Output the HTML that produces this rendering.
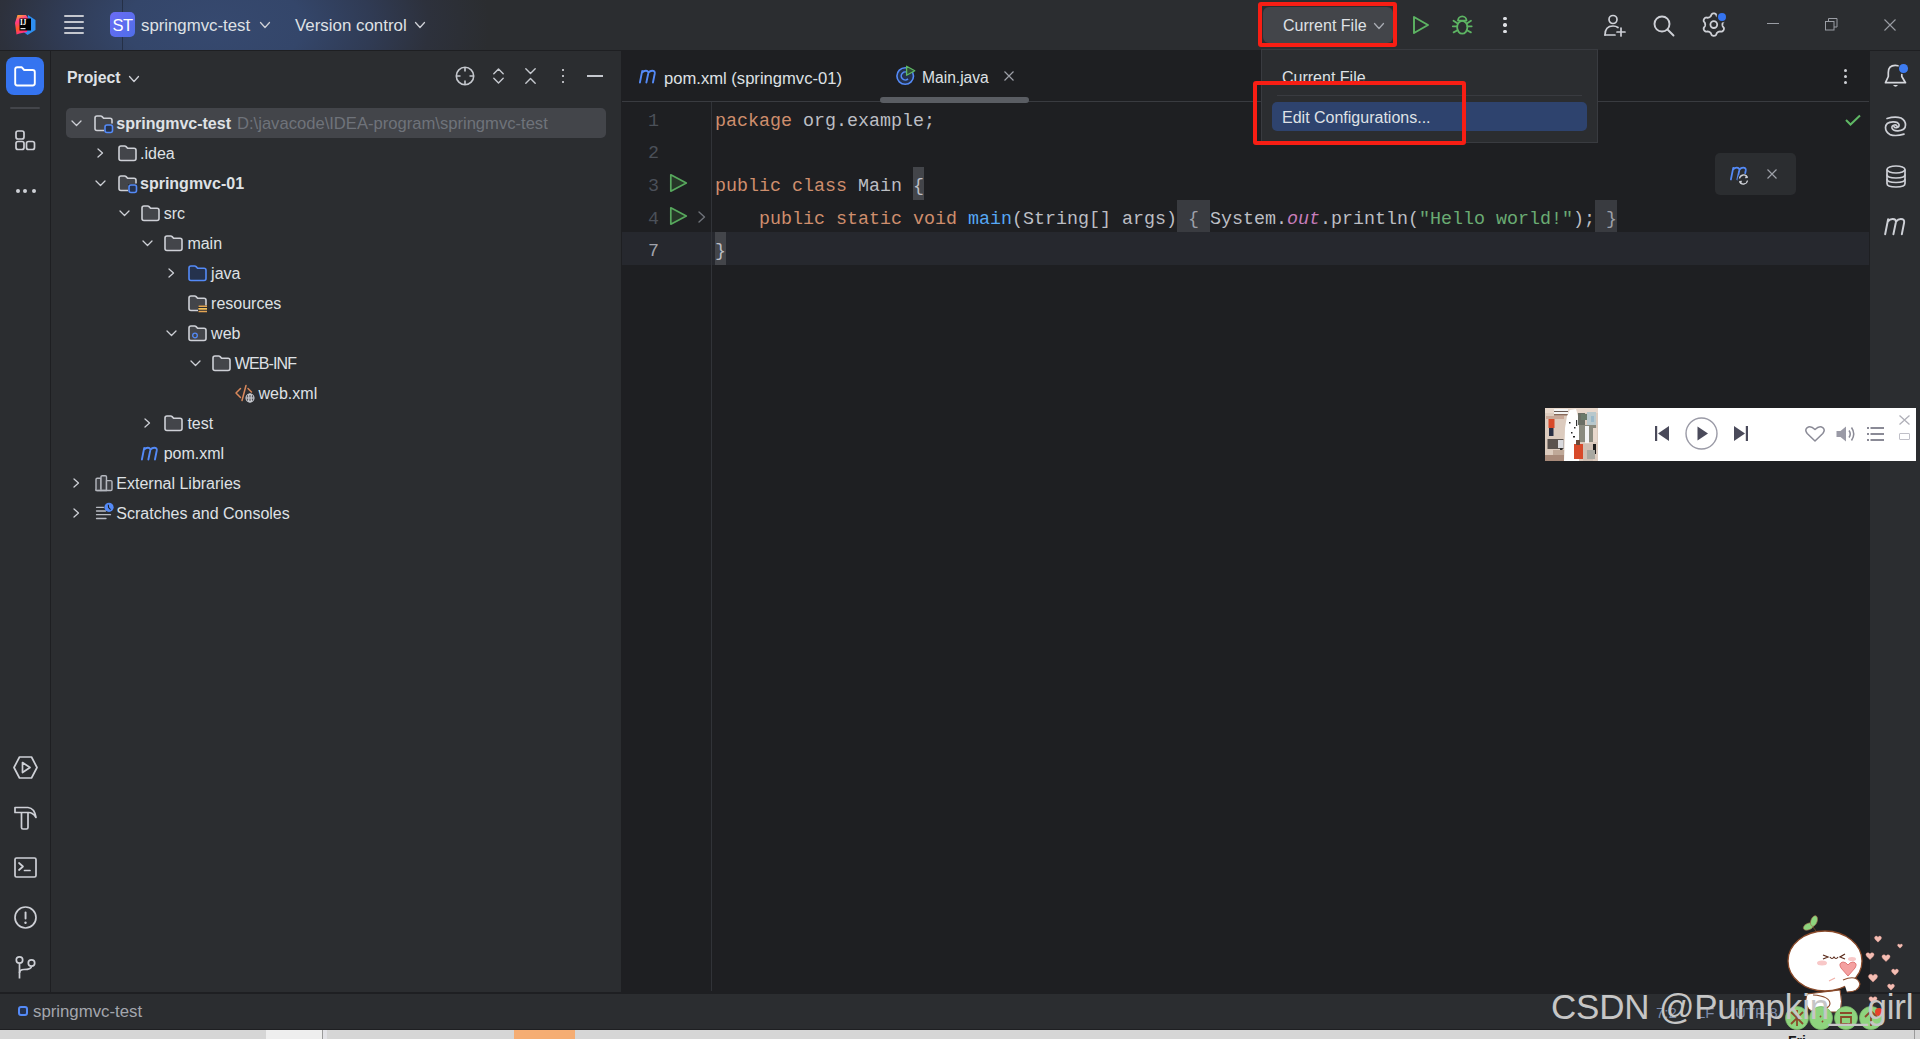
<!DOCTYPE html>
<html><head><meta charset="utf-8">
<style>
*{margin:0;padding:0;box-sizing:border-box}
html,body{width:1920px;height:1039px;overflow:hidden;background:#2B2D30;font-family:"Liberation Sans",sans-serif;color:#DFE1E5}
.a{position:absolute}
.tx{white-space:pre;line-height:1}
svg{position:absolute;overflow:visible}
</style></head>
<body>

<div class="a" style="left:0px;top:0px;width:1920px;height:50px;background:#2B2D30;"></div>
<div class="a" style="left:0px;top:0px;width:700px;height:50px;background:radial-gradient(ellipse 275px 150px at 215px 25px,#36496F 0%,#34466A 32%,#303B54 57%,#2D313C 78%,#2B2D30 100%);"></div>
<div class="a" style="left:122px;top:0px;width:1px;height:50px;background:rgba(20,24,34,0.45);"></div>
<div class="a" style="left:0px;top:50px;width:1920px;height:1px;background:#1E1F22;"></div>
<div class="a" style="left:0px;top:51px;width:50px;height:941px;background:#2B2D30;"></div>
<div class="a" style="left:50px;top:51px;width:1px;height:941px;background:#1E1F22;"></div>
<div class="a" style="left:51px;top:51px;width:570px;height:941px;background:#2B2D30;"></div>
<div class="a" style="left:621px;top:51px;width:1px;height:941px;background:#1E1F22;"></div>
<div class="a" style="left:622px;top:51px;width:1247px;height:941px;background:#1E1F22;"></div>
<div class="a" style="left:1869px;top:51px;width:1px;height:941px;background:#1E1F22;"></div>
<div class="a" style="left:1870px;top:51px;width:50px;height:941px;background:#2B2D30;"></div>
<div class="a" style="left:0px;top:992px;width:1920px;height:2px;background:#1E1F22;"></div>
<div class="a" style="left:0px;top:994px;width:1920px;height:35px;background:#2B2D30;"></div>
<div class="a" style="left:0px;top:1029px;width:1920px;height:1px;background:#1E1F22;"></div>
<div class="a" style="left:0px;top:1030px;width:1920px;height:9px;background:#D6D6D6;"></div>
<svg style="left:15px;top:14px;" width="21" height="21" viewBox="0 0 21 21"><defs><linearGradient id="ijg" x1="0" y1="0" x2="0.3" y2="1"><stop offset="0" stop-color="#FFC21A"/><stop offset="0.35" stop-color="#FF3A8C"/><stop offset="0.7" stop-color="#FF5A1E"/><stop offset="1" stop-color="#FF2D8A"/></linearGradient></defs>
<path d="M13 1 L20.5 6 L20.5 16 L12.5 21 L8 17.5 L12 9 Z" fill="#2E8EF0"/>
<path d="M2.5 1 L11 1 L13.5 5 L12 18 L4.5 19.5 L1.5 20.5 L0 9 Z" fill="url(#ijg)"/>
<rect x="4.5" y="4.5" width="11.5" height="12" fill="#000"/>
<text x="5" y="10.8" font-size="7.2" font-weight="bold" fill="#fff" font-family="Liberation Serif">IJ</text>
<rect x="5.5" y="14" width="5" height="1.2" fill="#E0E0E0"/></svg>
<div class="a" style="left:64px;top:15px;width:20px;height:2px;background:#C4C7CE;border-radius:1px"></div>
<div class="a" style="left:64px;top:21px;width:20px;height:2px;background:#C4C7CE;border-radius:1px"></div>
<div class="a" style="left:64px;top:27px;width:20px;height:2px;background:#C4C7CE;border-radius:1px"></div>
<div class="a" style="left:64px;top:32px;width:20px;height:2px;background:#C4C7CE;border-radius:1px"></div>
<div class="a" style="left:110px;top:12px;width:25px;height:25px;background:linear-gradient(135deg,#6B6CF5,#4F6EE8);border-radius:5px"></div>
<div class="a tx " style="left:112.5px;top:17px;font-size:16.5px;color:#FFFFFF;font-family:'Liberation Sans',sans-serif;letter-spacing:-0.6px;">ST</div>
<div class="a tx " style="left:141px;top:18px;font-size:16.8px;color:#DFE1E5;font-family:'Liberation Sans',sans-serif;">springmvc-test</div>
<svg style="left:260px;top:22px;" width="10" height="6" viewBox="0 0 10 6"><path d="M0.5 0.5 L5.0 5.5 L9.5 0.5" fill="none" stroke="#CED0D6" stroke-width="1.3" stroke-linecap="round" stroke-linejoin="round"/></svg>
<div class="a tx " style="left:295px;top:18px;font-size:16.9px;color:#DFE1E5;font-family:'Liberation Sans',sans-serif;">Version control</div>
<svg style="left:415px;top:22px;" width="10" height="6" viewBox="0 0 10 6"><path d="M0.5 0.5 L5.0 5.5 L9.5 0.5" fill="none" stroke="#CED0D6" stroke-width="1.3" stroke-linecap="round" stroke-linejoin="round"/></svg>
<div class="a" style="left:1263px;top:7px;width:130px;height:36px;background:#43454A;border-radius:6px"></div>
<div class="a tx " style="left:1283px;top:18px;font-size:16px;color:#DFE1E5;font-family:'Liberation Sans',sans-serif;">Current File</div>
<svg style="left:1374px;top:23px;" width="10" height="6" viewBox="0 0 10 6"><path d="M0.5 0.5 L5.0 5.5 L9.5 0.5" fill="none" stroke="#A8ABB2" stroke-width="1.3" stroke-linecap="round" stroke-linejoin="round"/></svg>
<svg style="left:1412px;top:15px;" width="18" height="20" viewBox="0 0 18 20"><path d="M2 2 L16 10 L2 18 Z" fill="none" stroke="#5DB463" stroke-width="1.9" stroke-linejoin="round"/></svg>
<svg style="left:1452px;top:15px;" width="21" height="20" viewBox="0 0 21 20"><g fill="none" stroke="#5DB463" stroke-width="1.8" stroke-linecap="round" stroke-linejoin="round">
<path d="M6 5.6 A4.25 4.25 0 0 1 14.5 5.6 Z"/><ellipse cx="10.25" cy="12.3" rx="5.1" ry="6.4"/>
<path d="M5.3 8.3 L1.5 5.8 M5 11.3 L0.8 11.3 M5.6 15.3 L1.6 17.4 M15.2 8.3 L19 5.8 M15.5 11.3 L19.7 11.3 M14.9 15.3 L18.9 17.4"/></g></svg>
<div class="a" style="left:1503.2px;top:16.7px;width:3.4px;height:3.4px;background:#DFE1E5;border-radius:50%"></div>
<div class="a" style="left:1503.2px;top:23.3px;width:3.4px;height:3.4px;background:#DFE1E5;border-radius:50%"></div>
<div class="a" style="left:1503.2px;top:29.900000000000002px;width:3.4px;height:3.4px;background:#DFE1E5;border-radius:50%"></div>
<svg style="left:1604px;top:14px;" width="23" height="23" viewBox="0 0 23 23"><g fill="none" stroke="#CED0D6" stroke-width="1.7" stroke-linecap="round">
<circle cx="9" cy="5.5" r="4"/><path d="M1 21 Q1 12 9 12 Q12 12 14 13.5"/><path d="M1 21 L11 21"/><path d="M17 14 L17 22 M13 18 L21 18"/></g></svg>
<svg style="left:1653px;top:15px;" width="22" height="22" viewBox="0 0 22 22"><g fill="none" stroke="#CED0D6" stroke-width="1.9" stroke-linecap="round"><circle cx="9" cy="9" r="7.5"/><path d="M14.5 14.5 L20.5 20.5"/></g></svg>
<svg style="left:1703px;top:13px;" width="22" height="24" viewBox="0 0 22 24"><g fill="none" stroke="#CED0D6" stroke-width="1.8" stroke-linejoin="round"><path d="M19.40 11.60 L19.42 12.05 L19.50 12.51 L19.62 13.00 L19.82 13.52 L20.36 14.16 L20.86 14.87 L20.95 15.50 L20.90 16.10 L20.75 16.67 L20.50 17.20 L20.16 17.68 L19.75 18.10 L19.25 18.44 L18.66 18.68 L17.80 18.60 L16.97 18.45 L16.42 18.54 L15.94 18.67 L15.50 18.84 L15.10 19.05 L14.72 19.29 L14.36 19.59 L14.00 19.94 L13.65 20.37 L13.36 21.16 L13.00 21.95 L12.50 22.34 L11.96 22.60 L11.38 22.75 L10.80 22.80 L10.22 22.75 L9.64 22.60 L9.10 22.34 L8.60 21.95 L8.24 21.16 L7.95 20.37 L7.60 19.94 L7.24 19.59 L6.88 19.29 L6.50 19.05 L6.10 18.84 L5.66 18.67 L5.18 18.54 L4.63 18.45 L3.80 18.60 L2.94 18.68 L2.35 18.44 L1.85 18.10 L1.44 17.68 L1.10 17.20 L0.85 16.67 L0.70 16.10 L0.65 15.50 L0.74 14.87 L1.24 14.16 L1.78 13.52 L1.98 13.00 L2.10 12.51 L2.18 12.05 L2.20 11.60 L2.18 11.15 L2.10 10.69 L1.98 10.20 L1.78 9.68 L1.24 9.04 L0.74 8.33 L0.65 7.70 L0.70 7.10 L0.85 6.53 L1.10 6.00 L1.44 5.52 L1.85 5.10 L2.35 4.76 L2.94 4.52 L3.80 4.60 L4.63 4.75 L5.18 4.66 L5.66 4.53 L6.10 4.36 L6.50 4.15 L6.88 3.91 L7.24 3.61 L7.60 3.26 L7.95 2.83 L8.24 2.04 L8.60 1.25 L9.10 0.86 L9.64 0.60 L10.22 0.45 L10.80 0.40 L11.38 0.45 L11.96 0.60 L12.50 0.86 L13.00 1.25 L13.36 2.04 L13.65 2.83 L14.00 3.26 L14.36 3.61 L14.72 3.91 L15.10 4.15 L15.50 4.36 L15.94 4.53 L16.42 4.66 L16.97 4.75 L17.80 4.60 L18.66 4.52 L19.25 4.76 L19.75 5.10 L20.16 5.52 L20.50 6.00 L20.75 6.53 L20.90 7.10 L20.95 7.70 L20.86 8.33 L20.36 9.04 L19.82 9.68 L19.62 10.20 L19.50 10.69 L19.42 11.15 Z"/><circle cx="10.8" cy="11.6" r="3.4"/></g></svg>
<div class="a" style="left:1718px;top:13px;width:8px;height:8px;background:#3574F0;border-radius:50%;box-shadow:0 0 0 1.5px #2B2D30"></div>
<div class="a" style="left:1767px;top:23px;width:12px;height:1px;background:#9A9DA4;"></div>
<svg style="left:1825px;top:18px;" width="13" height="13" viewBox="0 0 13 13"><g fill="none" stroke="#9A9DA4" stroke-width="1"><rect x="0.5" y="3.5" width="8.5" height="8.5"/><path d="M3.5 3.5 L3.5 0.5 L12 0.5 L12 9 L9 9"/></g></svg>
<svg style="left:1884px;top:19px;" width="12" height="12" viewBox="0 0 12 12"><path d="M0.5 0.5 L11.5 11.5 M11.5 0.5 L0.5 11.5" stroke="#9A9DA4" stroke-width="1.1"/></svg>
<div class="a" style="left:6px;top:57px;width:38px;height:38px;background:#3574F0;border-radius:8px"></div>
<svg style="left:13px;top:66px;" width="24" height="21" viewBox="0 0 24 21"><path d="M2.2 3.3 Q2.2 1.2 4.3 1.2 L8.6 1.2 L11.2 4 L19.6 4 Q21.8 4 21.8 6.2 L21.8 17.3 Q21.8 19.5 19.6 19.5 L4.3 19.5 Q2.2 19.5 2.2 17.3 Z" fill="none" stroke="#FFFFFF" stroke-width="1.9" stroke-linejoin="round"/></svg>
<div class="a" style="left:10px;top:107px;width:30px;height:2px;background:#43454A;border-radius:1px"></div>
<svg style="left:15px;top:130px;" width="21" height="21" viewBox="0 0 21 21"><g fill="none" stroke="#CED0D6" stroke-width="1.7"><rect x="1" y="1" width="8" height="8" rx="2"/><rect x="1" y="11.5" width="8" height="8" rx="2"/><rect x="11.5" y="11.5" width="8" height="8" rx="2"/></g></svg>
<div class="a" style="left:15.5px;top:188.5px;width:4px;height:4px;background:#CED0D6;border-radius:50%"></div>
<div class="a" style="left:23.4px;top:188.5px;width:4px;height:4px;background:#CED0D6;border-radius:50%"></div>
<div class="a" style="left:31.6px;top:188.5px;width:4px;height:4px;background:#CED0D6;border-radius:50%"></div>
<svg style="left:13px;top:756px;" width="25" height="23" viewBox="0 0 25 23"><g fill="none" stroke="#CED0D6" stroke-width="1.7" stroke-linejoin="round"><path d="M6.5 1 L18.5 1 L24 11.5 L18.5 22 L6.5 22 L1 11.5 Z"/><path d="M9.5 6.5 L17 11.5 L9.5 16.5 Z"/></g></svg>
<svg style="left:14px;top:806px;" width="24" height="24" viewBox="0 0 24 24"><g fill="none" stroke="#CED0D6" stroke-width="1.7" stroke-linejoin="round"><path d="M1 1.5 L14 1.5 Q20.5 2 22 11.5 Q19 6.5 14.5 6.5 L1 6.5 Z"/><path d="M7.5 6.5 L7.5 21.5 Q7.5 23 9 23 L12.5 23 Q14 23 14 21.5 L14 6.5"/></g></svg>
<svg style="left:14px;top:857px;" width="23" height="21" viewBox="0 0 23 21"><g fill="none" stroke="#CED0D6" stroke-width="1.7" stroke-linejoin="round" stroke-linecap="round"><rect x="1" y="1" width="21" height="19" rx="1.5"/><path d="M5 6 L9 9.5 L5 13"/><path d="M10.5 13.5 L16 13.5"/></g></svg>
<svg style="left:14px;top:906px;" width="23" height="23" viewBox="0 0 23 23"><g fill="none" stroke="#CED0D6" stroke-width="1.7"><circle cx="11.5" cy="11.5" r="10.5"/></g><rect x="10.6" y="5.5" width="1.9" height="8" rx="0.9" fill="#CED0D6"/><circle cx="11.5" cy="16.8" r="1.2" fill="#CED0D6"/></svg>
<svg style="left:15px;top:956px;" width="21" height="23" viewBox="0 0 21 23"><g fill="none" stroke="#CED0D6" stroke-width="1.7"><circle cx="4.5" cy="4" r="3.2"/><circle cx="16.5" cy="7" r="3.2"/><path d="M4.5 7.2 L4.5 22.5"/><path d="M4.5 17 Q4.5 13.5 9 13.5 Q16.5 13.5 16.5 10.2"/></g></svg>
<div class="a tx " style="left:67px;top:70px;font-size:15.8px;color:#DFE1E5;font-family:'Liberation Sans',sans-serif;font-weight:bold;">Project</div>
<svg style="left:128.5px;top:75.5px;" width="10" height="6" viewBox="0 0 10 6"><path d="M0.5 0.5 L5.0 5.5 L9.5 0.5" fill="none" stroke="#CED0D6" stroke-width="1.3" stroke-linecap="round" stroke-linejoin="round"/></svg>
<svg style="left:455px;top:66px;" width="20" height="20" viewBox="0 0 20 20"><g fill="none" stroke="#C5C8CE" stroke-width="1.6"><circle cx="10" cy="10" r="8.7"/><path d="M10 1.3 L10 5.5 M10 14.5 L10 18.7 M1.3 10 L5.5 10 M14.5 10 L18.7 10"/></g></svg>
<svg style="left:493px;top:68px;" width="11" height="16" viewBox="0 0 11 16"><g fill="none" stroke="#C5C8CE" stroke-width="1.4" stroke-linecap="round" stroke-linejoin="round"><path d="M0.8 5.8 L5.5 1 L10.2 5.8"/><path d="M0.8 10.2 L5.5 15 L10.2 10.2"/></g></svg>
<svg style="left:525px;top:68px;" width="11" height="16" viewBox="0 0 11 16"><g fill="none" stroke="#C5C8CE" stroke-width="1.4" stroke-linecap="round" stroke-linejoin="round"><path d="M0.8 0.8 L5.5 5.5 L10.2 0.8"/><path d="M0.8 15.2 L5.5 10.5 L10.2 15.2"/></g></svg>
<div class="a" style="left:561.7px;top:68.5px;width:2.6px;height:2.6px;background:#D0D2D7;border-radius:0.8px"></div>
<div class="a" style="left:561.7px;top:74.60000000000001px;width:2.6px;height:2.6px;background:#D0D2D7;border-radius:0.8px"></div>
<div class="a" style="left:561.7px;top:80.9px;width:2.6px;height:2.6px;background:#D0D2D7;border-radius:0.8px"></div>
<div class="a" style="left:587px;top:75px;width:16px;height:1.8px;background:#C5C8CE;"></div>
<div class="a" style="left:66px;top:108px;width:540px;height:30px;background:#43454A;border-radius:5px"></div>
<svg style="left:71.0px;top:120px;" width="11" height="7" viewBox="0 0 11 7"><path d="M1 1 L5.5 5.5 L10 1" fill="none" stroke="#CED0D6" stroke-width="1.3" stroke-linecap="round" stroke-linejoin="round"/></svg>
<svg style="left:94px;top:115px;" width="20" height="18" viewBox="0 0 20 18"><path d="M1 3 Q1 1 3 1 L6.6 1 Q7.5 1 8.1 1.6 L9.6 3.3 L16 3.3 Q18 3.3 18 5.3 L18 9 L10 9 L10 15.5 L3 15.5 Q1 15.5 1 13.5 Z" fill="#43454A" stroke="none"/><path d="M10 15.5 L3 15.5 Q1 15.5 1 13.5 L1 3 Q1 1 3 1 L6.6 1 Q7.5 1 8.1 1.6 L9.6 3.3 L16 3.3 Q18 3.3 18 5.3 L18 8.5" fill="none" stroke="#CED0D6" stroke-width="1.6" stroke-linejoin="round"/><rect x="11" y="10" width="7.5" height="7.5" rx="2" fill="#25324D" stroke="#548AF7" stroke-width="1.6"/></svg>
<div class="a tx " style="left:116.3px;top:116px;font-size:16px;color:#DFE1E5;font-family:'Liberation Sans',sans-serif;font-weight:bold;">springmvc-test</div>
<div class="a tx " style="left:237px;top:116px;font-size:16.6px;color:#6F737A;font-family:'Liberation Sans',sans-serif;">D:\javacode\IDEA-program\springmvc-test</div>
<svg style="left:96.8px;top:148px;" width="7" height="10" viewBox="0 0 7 10"><path d="M1 1 L5.5 5 L1 9" fill="none" stroke="#CED0D6" stroke-width="1.3" stroke-linecap="round" stroke-linejoin="round"/></svg>
<svg style="left:118px;top:145px;" width="20" height="18" viewBox="0 0 20 18"><path d="M1 3 Q1 1 3 1 L6.6 1 Q7.5 1 8.1 1.6 L9.6 3.3 L16 3.3 Q18 3.3 18 5.3 L18 13.5 Q18 15.5 16 15.5 L3 15.5 Q1 15.5 1 13.5 Z" fill="#43454A" stroke="#CED0D6" stroke-width="1.6" stroke-linejoin="round"/></svg>
<div class="a tx " style="left:140.0px;top:146px;font-size:16px;color:#DFE1E5;font-family:'Liberation Sans',sans-serif;">.idea</div>
<svg style="left:94.8px;top:180px;" width="11" height="7" viewBox="0 0 11 7"><path d="M1 1 L5.5 5.5 L10 1" fill="none" stroke="#CED0D6" stroke-width="1.3" stroke-linecap="round" stroke-linejoin="round"/></svg>
<svg style="left:118px;top:175px;" width="20" height="18" viewBox="0 0 20 18"><path d="M1 3 Q1 1 3 1 L6.6 1 Q7.5 1 8.1 1.6 L9.6 3.3 L16 3.3 Q18 3.3 18 5.3 L18 9 L10 9 L10 15.5 L3 15.5 Q1 15.5 1 13.5 Z" fill="#43454A" stroke="none"/><path d="M10 15.5 L3 15.5 Q1 15.5 1 13.5 L1 3 Q1 1 3 1 L6.6 1 Q7.5 1 8.1 1.6 L9.6 3.3 L16 3.3 Q18 3.3 18 5.3 L18 8.5" fill="none" stroke="#CED0D6" stroke-width="1.6" stroke-linejoin="round"/><rect x="11" y="10" width="7.5" height="7.5" rx="2" fill="#25324D" stroke="#548AF7" stroke-width="1.6"/></svg>
<div class="a tx " style="left:140.0px;top:176px;font-size:16px;color:#DFE1E5;font-family:'Liberation Sans',sans-serif;font-weight:bold;">springmvc-01</div>
<svg style="left:118.6px;top:210px;" width="11" height="7" viewBox="0 0 11 7"><path d="M1 1 L5.5 5.5 L10 1" fill="none" stroke="#CED0D6" stroke-width="1.3" stroke-linecap="round" stroke-linejoin="round"/></svg>
<svg style="left:141px;top:205px;" width="20" height="18" viewBox="0 0 20 18"><path d="M1 3 Q1 1 3 1 L6.6 1 Q7.5 1 8.1 1.6 L9.6 3.3 L16 3.3 Q18 3.3 18 5.3 L18 13.5 Q18 15.5 16 15.5 L3 15.5 Q1 15.5 1 13.5 Z" fill="#43454A" stroke="#CED0D6" stroke-width="1.6" stroke-linejoin="round"/></svg>
<div class="a tx " style="left:163.7px;top:206px;font-size:16px;color:#DFE1E5;font-family:'Liberation Sans',sans-serif;">src</div>
<svg style="left:142.4px;top:240px;" width="11" height="7" viewBox="0 0 11 7"><path d="M1 1 L5.5 5.5 L10 1" fill="none" stroke="#CED0D6" stroke-width="1.3" stroke-linecap="round" stroke-linejoin="round"/></svg>
<svg style="left:164px;top:235px;" width="20" height="18" viewBox="0 0 20 18"><path d="M1 3 Q1 1 3 1 L6.6 1 Q7.5 1 8.1 1.6 L9.6 3.3 L16 3.3 Q18 3.3 18 5.3 L18 13.5 Q18 15.5 16 15.5 L3 15.5 Q1 15.5 1 13.5 Z" fill="#43454A" stroke="#CED0D6" stroke-width="1.6" stroke-linejoin="round"/></svg>
<div class="a tx " style="left:187.4px;top:236px;font-size:16px;color:#DFE1E5;font-family:'Liberation Sans',sans-serif;">main</div>
<svg style="left:167.9px;top:268px;" width="7" height="10" viewBox="0 0 7 10"><path d="M1 1 L5.5 5 L1 9" fill="none" stroke="#CED0D6" stroke-width="1.3" stroke-linecap="round" stroke-linejoin="round"/></svg>
<svg style="left:188px;top:265px;" width="20" height="18" viewBox="0 0 20 18"><path d="M1 3 Q1 1 3 1 L6.6 1 Q7.5 1 8.1 1.6 L9.6 3.3 L16 3.3 Q18 3.3 18 5.3 L18 13.5 Q18 15.5 16 15.5 L3 15.5 Q1 15.5 1 13.5 Z" fill="#25324D" stroke="#548AF7" stroke-width="1.6" stroke-linejoin="round"/></svg>
<div class="a tx " style="left:211.1px;top:266px;font-size:16px;color:#DFE1E5;font-family:'Liberation Sans',sans-serif;">java</div>
<svg style="left:188px;top:295px;" width="20" height="18" viewBox="0 0 20 18"><path d="M1 3 Q1 1 3 1 L6.6 1 Q7.5 1 8.1 1.6 L9.6 3.3 L16 3.3 Q18 3.3 18 5.3 L18 13.5 Q18 15.5 16 15.5 L3 15.5 Q1 15.5 1 13.5 Z" fill="#43454A" stroke="#CED0D6" stroke-width="1.6" stroke-linejoin="round"/><rect x="10" y="10.5" width="10" height="6.5" fill="#2B2D30"/><path d="M10.5 11.2 L19 11.2 M10.5 13.8 L19 13.8 M10.5 16.5 L19 16.5" stroke="#E3A554" stroke-width="1.4"/><path d="M10.5 13.8 L19 13.8" stroke="#F2C55C" stroke-width="1.4"/></svg>
<div class="a tx " style="left:211.1px;top:296px;font-size:16px;color:#DFE1E5;font-family:'Liberation Sans',sans-serif;">resources</div>
<svg style="left:166.2px;top:330px;" width="11" height="7" viewBox="0 0 11 7"><path d="M1 1 L5.5 5.5 L10 1" fill="none" stroke="#CED0D6" stroke-width="1.3" stroke-linecap="round" stroke-linejoin="round"/></svg>
<svg style="left:188px;top:325px;" width="20" height="18" viewBox="0 0 20 18"><path d="M1 3 Q1 1 3 1 L6.6 1 Q7.5 1 8.1 1.6 L9.6 3.3 L16 3.3 Q18 3.3 18 5.3 L18 13.5 Q18 15.5 16 15.5 L3 15.5 Q1 15.5 1 13.5 Z" fill="#43454A" stroke="#CED0D6" stroke-width="1.6" stroke-linejoin="round"/><circle cx="7" cy="10.5" r="2.3" fill="none" stroke="#548AF7" stroke-width="1.3"/></svg>
<div class="a tx " style="left:211.1px;top:326px;font-size:16px;color:#DFE1E5;font-family:'Liberation Sans',sans-serif;">web</div>
<svg style="left:190.0px;top:360px;" width="11" height="7" viewBox="0 0 11 7"><path d="M1 1 L5.5 5.5 L10 1" fill="none" stroke="#CED0D6" stroke-width="1.3" stroke-linecap="round" stroke-linejoin="round"/></svg>
<svg style="left:212px;top:355px;" width="20" height="18" viewBox="0 0 20 18"><path d="M1 3 Q1 1 3 1 L6.6 1 Q7.5 1 8.1 1.6 L9.6 3.3 L16 3.3 Q18 3.3 18 5.3 L18 13.5 Q18 15.5 16 15.5 L3 15.5 Q1 15.5 1 13.5 Z" fill="#43454A" stroke="#CED0D6" stroke-width="1.6" stroke-linejoin="round"/></svg>
<div class="a tx " style="left:234.8px;top:356px;font-size:16px;color:#DFE1E5;font-family:'Liberation Sans',sans-serif;letter-spacing:-0.9px;">WEB-INF</div>
<svg style="left:235px;top:385px;" width="21" height="19" viewBox="0 0 21 19"><g fill="none" stroke="#D9885B" stroke-width="1.5" stroke-linecap="round" stroke-linejoin="round"><path d="M5.5 3.5 L1 8 L5.5 12.5"/><path d="M11 0.5 L7 15.5"/><path d="M13 3.5 L16.5 7"/></g><circle cx="15" cy="13" r="5" fill="#2B2D30"/><g fill="none" stroke="#CED0D6" stroke-width="1.1"><circle cx="15" cy="13" r="4"/><path d="M11 13 L19 13 M15 9 L15 17"/><ellipse cx="15" cy="13" rx="1.8" ry="4"/></g></svg>
<div class="a tx " style="left:258.5px;top:386px;font-size:16px;color:#DFE1E5;font-family:'Liberation Sans',sans-serif;">web.xml</div>
<svg style="left:144.2px;top:418px;" width="7" height="10" viewBox="0 0 7 10"><path d="M1 1 L5.5 5 L1 9" fill="none" stroke="#CED0D6" stroke-width="1.3" stroke-linecap="round" stroke-linejoin="round"/></svg>
<svg style="left:164px;top:415px;" width="20" height="18" viewBox="0 0 20 18"><path d="M1 3 Q1 1 3 1 L6.6 1 Q7.5 1 8.1 1.6 L9.6 3.3 L16 3.3 Q18 3.3 18 5.3 L18 13.5 Q18 15.5 16 15.5 L3 15.5 Q1 15.5 1 13.5 Z" fill="#43454A" stroke="#CED0D6" stroke-width="1.6" stroke-linejoin="round"/></svg>
<div class="a tx " style="left:187.4px;top:416px;font-size:16px;color:#DFE1E5;font-family:'Liberation Sans',sans-serif;">test</div>
<svg style="left:141px;top:447px;" width="18" height="13" viewBox="0 0 18 13"><g transform="scale(0.7500,0.7647)"><path d="M1.2 16.3 L4.3 1.2 M3.9 3.6 Q6 0.9 9 0.9 Q12.8 0.9 12.4 4.2 L9.8 16.3 M12.5 3.6 Q14.6 0.9 17.6 0.9 Q21.6 0.9 21 4.6 L18.6 16.3" fill="none" stroke="#548AF7" stroke-width="2.509" stroke-linecap="round" stroke-linejoin="round"/></g></svg>
<div class="a tx " style="left:163.7px;top:446px;font-size:16px;color:#DFE1E5;font-family:'Liberation Sans',sans-serif;">pom.xml</div>
<svg style="left:73.1px;top:478px;" width="7" height="10" viewBox="0 0 7 10"><path d="M1 1 L5.5 5 L1 9" fill="none" stroke="#CED0D6" stroke-width="1.3" stroke-linecap="round" stroke-linejoin="round"/></svg>
<svg style="left:95px;top:475px;" width="18" height="17" viewBox="0 0 18 17"><g fill="#3C3E43" stroke="#B4B7BE" stroke-width="1.4" stroke-linejoin="round"><path d="M1 15.5 L1 4.5 Q1 3.3 2.2 3.3 L6 3.3 L6 15.5 Z"/><path d="M6 15.5 L6 1.8 Q6 0.8 7.2 0.8 L10.3 0.8 Q11.5 0.8 11.5 1.8 L11.5 15.5 Z"/><path d="M11.5 15.5 L11.5 5.6 L15.8 5.6 Q17 5.6 17 6.8 L17 14.3 Q17 15.5 15.8 15.5 Z"/><path d="M1 14.3 Q1 15.5 2.2 15.5 L11.5 15.5"/></g></svg>
<div class="a tx " style="left:116.3px;top:476px;font-size:16px;color:#DFE1E5;font-family:'Liberation Sans',sans-serif;">External Libraries</div>
<svg style="left:73.1px;top:508px;" width="7" height="10" viewBox="0 0 7 10"><path d="M1 1 L5.5 5 L1 9" fill="none" stroke="#CED0D6" stroke-width="1.3" stroke-linecap="round" stroke-linejoin="round"/></svg>
<svg style="left:95px;top:502px;" width="20" height="19" viewBox="0 0 20 19"><g stroke="#B8BBC2" stroke-width="1.3" stroke-linecap="round"><path d="M1.5 5.3 L8.5 5.3 M1.5 9 L10.5 9 M1.5 12.7 L15.5 12.7 M1.5 16.5 L11 16.5"/></g><circle cx="14" cy="5.3" r="4.6" fill="#548AF7"/><path d="M13.3 2.8 L13.6 5.6 L15.6 7.6" stroke="#1E1F22" stroke-width="1.1" fill="none"/></svg>
<div class="a tx " style="left:116.3px;top:506px;font-size:16px;color:#DFE1E5;font-family:'Liberation Sans',sans-serif;">Scratches and Consoles</div>
<div class="a" style="left:622px;top:101px;width:1247px;height:1px;background:#393B40;"></div>
<div class="a" style="left:622px;top:232px;width:1247px;height:33px;background:#26282E;"></div>
<div class="a" style="left:711px;top:102px;width:1px;height:889px;background:#313338;"></div>
<svg style="left:639px;top:70px;" width="18" height="13" viewBox="0 0 18 13"><g transform="scale(0.7500,0.7647)"><path d="M1.2 16.3 L4.3 1.2 M3.9 3.6 Q6 0.9 9 0.9 Q12.8 0.9 12.4 4.2 L9.8 16.3 M12.5 3.6 Q14.6 0.9 17.6 0.9 Q21.6 0.9 21 4.6 L18.6 16.3" fill="none" stroke="#548AF7" stroke-width="2.509" stroke-linecap="round" stroke-linejoin="round"/></g></svg>
<div class="a tx " style="left:664px;top:71px;font-size:16.6px;color:#DFE1E5;font-family:'Liberation Sans',sans-serif;">pom.xml (springmvc-01)</div>
<svg style="left:896px;top:63px;" width="22" height="23" viewBox="0 0 22 23"><circle cx="9.2" cy="13" r="8.3" fill="#25324D" stroke="#548AF7" stroke-width="1.6"/><path d="M12 10.1 A4 4 0 1 0 12 15.9" fill="none" stroke="#548AF7" stroke-width="1.6"/><path d="M10.6 3.2 L18.8 7.7 L10.6 12.2 Z" fill="#2F4A33" stroke="#5FB865" stroke-width="1.3" stroke-linejoin="round"/></svg>
<div class="a tx " style="left:922px;top:70px;font-size:15.6px;color:#DFE1E5;font-family:'Liberation Sans',sans-serif;">Main.java</div>
<svg style="left:1004px;top:71px;" width="10" height="10" viewBox="0 0 10 10"><path d="M0.5 0.5 L9.5 9.5 M9.5 0.5 L0.5 9.5" stroke="#9DA0A8" stroke-width="1.2"/></svg>
<div class="a" style="left:880px;top:97px;width:149px;height:6px;background:#5A5D63;border-radius:3px"></div>
<div class="a" style="left:1843.5px;top:68.5px;width:3px;height:3px;background:#CED0D6;border-radius:50%"></div>
<div class="a" style="left:1843.5px;top:74.8px;width:3px;height:3px;background:#CED0D6;border-radius:50%"></div>
<div class="a" style="left:1843.5px;top:81.0px;width:3px;height:3px;background:#CED0D6;border-radius:50%"></div>
<svg style="left:1845px;top:114px;" width="16" height="12" viewBox="0 0 16 12"><path d="M1 6 L5.5 10.5 L15 1.5" fill="none" stroke="#5FB865" stroke-width="2"/></svg>
<div class="a tx " style="left:648px;top:113px;font-size:18.33px;color:#4B5059;font-family:'Liberation Mono',monospace;">1</div>
<div class="a tx " style="left:648px;top:145px;font-size:18.33px;color:#4B5059;font-family:'Liberation Mono',monospace;">2</div>
<div class="a tx " style="left:648px;top:178px;font-size:18.33px;color:#4B5059;font-family:'Liberation Mono',monospace;">3</div>
<div class="a tx " style="left:648px;top:211px;font-size:18.33px;color:#4B5059;font-family:'Liberation Mono',monospace;">4</div>
<div class="a tx " style="left:648px;top:243px;font-size:18.33px;color:#A1A3AB;font-family:'Liberation Mono',monospace;">7</div>
<svg style="left:669px;top:173.0px;" width="19" height="20" viewBox="0 0 19 20"><path d="M1.8 1.8 L17.3 10 L1.8 18.2 Z" fill="#263628" stroke="#57A85D" stroke-width="1.7" stroke-linejoin="round"/></svg>
<svg style="left:669px;top:205.5px;" width="19" height="20" viewBox="0 0 19 20"><path d="M1.8 1.8 L17.3 10 L1.8 18.2 Z" fill="#263628" stroke="#57A85D" stroke-width="1.7" stroke-linejoin="round"/></svg>
<svg style="left:698px;top:210.5px;" width="8" height="12" viewBox="0 0 8 12"><path d="M1 1 L6.5 6 L1 11" fill="none" stroke="#6F737A" stroke-width="1.4" stroke-linecap="round" stroke-linejoin="round"/></svg>
<div class="a" style="left:913.0px;top:167.0px;width:11.0px;height:32.5px;background:#43454A;"></div>
<div class="a" style="left:715.0px;top:232.0px;width:11.0px;height:32.5px;background:#43454A;"></div>
<div class="a" style="left:1177.0px;top:199.5px;width:33.0px;height:32.5px;background:#393B40;"></div>
<div class="a" style="left:1595.0px;top:199.5px;width:22.0px;height:32.5px;background:#393B40;"></div>
<div class="a tx" style="left:715px;top:113px;font-family:'Liberation Mono',monospace;font-size:18.33px"><span style="color:#CF8E6D;">package</span><span style="color:#BCBEC4;"> org.example;</span></div>
<div class="a tx" style="left:715px;top:178px;font-family:'Liberation Mono',monospace;font-size:18.33px"><span style="color:#CF8E6D;">public class</span><span style="color:#BCBEC4;"> Main </span><span style="color:#BCBEC4;">{</span></div>
<div class="a tx" style="left:715px;top:211px;font-family:'Liberation Mono',monospace;font-size:18.33px"><span style="color:#CF8E6D;">    public static void</span><span style="color:#BCBEC4;"> </span><span style="color:#56A8F5;">main</span><span style="color:#BCBEC4;">(String[] args)</span><span style="color:#9DA0A8;"> { </span><span style="color:#BCBEC4;">System.</span><span style="color:#C77DBB;font-style:italic">out</span><span style="color:#BCBEC4;">.println(</span><span style="color:#6AAB73;">"Hello world!"</span><span style="color:#BCBEC4;">);</span><span style="color:#9DA0A8;"> }</span></div>
<div class="a tx" style="left:715px;top:243px;font-family:'Liberation Mono',monospace;font-size:18.33px"><span style="color:#BCBEC4;">}</span></div>
<div class="a" style="left:1715px;top:153px;width:81px;height:42px;background:#2B2D30;border-radius:5px"></div>
<svg style="left:1730px;top:167px;" width="18" height="13" viewBox="0 0 18 13"><g transform="scale(0.7500,0.7647)"><path d="M1.2 16.3 L4.3 1.2 M3.9 3.6 Q6 0.9 9 0.9 Q12.8 0.9 12.4 4.2 L9.8 16.3 M12.5 3.6 Q14.6 0.9 17.6 0.9 Q21.6 0.9 21 4.6 L18.6 16.3" fill="none" stroke="#548AF7" stroke-width="2.377" stroke-linecap="round" stroke-linejoin="round"/></g></svg>
<svg style="left:1737px;top:173px;" width="13" height="13" viewBox="0 0 13 13"><circle cx="6.5" cy="6.5" r="6" fill="#2B2D30"/><g fill="none" stroke="#CED0D6" stroke-width="1.3"><path d="M2.5 5.5 A4.2 4.2 0 0 1 10.5 4.5"/><path d="M10.5 7.5 A4.2 4.2 0 0 1 2.5 8.5"/></g><path d="M9 2 L11 5 L8 5.2 Z M4 11 L2 8 L5 7.8 Z" fill="#CED0D6"/></svg>
<svg style="left:1767px;top:169px;" width="10" height="10" viewBox="0 0 10 10"><path d="M0.5 0.5 L9.5 9.5 M9.5 0.5 L0.5 9.5" stroke="#9DA0A8" stroke-width="1.2"/></svg>
<svg style="left:1884px;top:64px;" width="24" height="25" viewBox="0 0 24 25"><g fill="none" stroke="#D5D7DC" stroke-width="1.7" stroke-linejoin="round" stroke-linecap="round"><path d="M17.8 10.6 L17.8 12.5 L21.5 18.7 L1.5 18.7 L4.3 12.5 L4.3 8.5 Q4.3 1.4 11.2 1.4 Q12.8 1.4 14 1.8"/></g><path d="M9 21 Q11.5 24.5 14 21 Z" fill="#D5D7DC"/></svg>
<div class="a" style="left:1899px;top:64px;width:8.6px;height:8.6px;background:#3D7BF0;border-radius:50%"></div>
<svg style="left:1885px;top:116px;" width="21" height="21" viewBox="0 0 21 21"><path d="M2 2.5 Q10 0 16 2 Q20.5 4.5 20.5 9 Q20.5 14.5 13 14.8 Q8 15 7 12 Q6.5 9.5 9.5 9 Q11.5 8.8 12 10 M19 18.1 Q11 20.6 5 18.6 Q0.5 16.1 0.5 11.6 Q0.5 6.1 8 5.8 Q13 5.6 14 8.6 Q14.5 11.1 11.5 11.6 Q9.5 11.8 9 10.6" fill="none" stroke="#CED0D6" stroke-width="1.7" stroke-linecap="round"/></svg>
<svg style="left:1885px;top:165px;" width="22" height="23" viewBox="0 0 22 23"><g fill="none" stroke="#CED0D6" stroke-width="1.7"><ellipse cx="11" cy="4.5" rx="9" ry="3.5"/><path d="M2 4.5 L2 18.5 Q2 22 11 22 Q20 22 20 18.5 L20 4.5"/><path d="M2 9.5 Q2 13 11 13 Q20 13 20 9.5 M2 14 Q2 17.5 11 17.5 Q20 17.5 20 14"/></g></svg>
<svg style="left:1884px;top:218px;" width="23" height="17" viewBox="0 0 23 17"><g transform="scale(0.9583,1.0000)"><path d="M1.2 16.3 L4.3 1.2 M3.9 3.6 Q6 0.9 9 0.9 Q12.8 0.9 12.4 4.2 L9.8 16.3 M12.5 3.6 Q14.6 0.9 17.6 0.9 Q21.6 0.9 21 4.6 L18.6 16.3" fill="none" stroke="#CED0D6" stroke-width="2.043" stroke-linecap="round" stroke-linejoin="round"/></g></svg>
<div class="a" style="left:1261px;top:49px;width:337px;height:94px;background:#2B2D30;border:1px solid #393B40"></div>
<div class="a tx " style="left:1282px;top:70px;font-size:16px;color:#DFE1E5;font-family:'Liberation Sans',sans-serif;">Current File</div>
<div class="a" style="left:1277px;top:95px;width:305px;height:1px;background:#393B40;"></div>
<div class="a" style="left:1272px;top:102px;width:315px;height:29px;background:#2E436E;border-radius:5px"></div>
<div class="a tx " style="left:1282px;top:110px;font-size:16px;color:#DFE1E5;font-family:'Liberation Sans',sans-serif;">Edit Configurations...</div>
<div class="a" style="left:1258px;top:2px;width:139px;height:45px;background:transparent;border:4px solid #F81E14;border-radius:3px"></div>
<div class="a" style="left:1253px;top:81px;width:213px;height:64px;background:transparent;border:4px solid #F81E14;border-radius:3px"></div>
<div class="a" style="left:18px;top:1006px;width:10px;height:10px;background:#25324D;border:2px solid #548AF7;border-radius:3px"></div>
<div class="a tx " style="left:33px;top:1004px;font-size:16.8px;color:#A3A6AD;font-family:'Liberation Sans',sans-serif;">springmvc-test</div>
<div class="a" style="left:266px;top:1030px;width:56px;height:9px;background:#EEEEEE;"></div>
<div class="a" style="left:322px;top:1030px;width:1px;height:9px;background:#9A9A9A;"></div>
<div class="a" style="left:323px;top:1030px;width:4px;height:9px;background:#E2E2E6;"></div>
<div class="a" style="left:514px;top:1030px;width:61px;height:9px;background:#F5AD73;"></div>
<div class="a tx " style="left:1656px;top:1005px;font-size:15px;color:#7C8BAA;font-family:'Liberation Sans',sans-serif;">7:2</div>
<div class="a tx " style="left:1697px;top:1005px;font-size:15px;color:#7C8BAA;font-family:'Liberation Sans',sans-serif;">LF</div>
<div class="a tx " style="left:1735px;top:1005px;font-size:15px;color:#7C8BAA;font-family:'Liberation Sans',sans-serif;">UTF-8</div>
<div class="a tx " style="left:1788px;top:1034px;font-size:14px;color:#1A1A1A;font-family:'Liberation Sans',sans-serif;font-weight:bold;">Fri...</div>
<div class="a" style="left:1914px;top:1030px;width:1px;height:9px;background:#9A9A9A;"></div>
<div class="a" style="left:1545px;top:408px;width:371px;height:53px;background:#FFFFFF;"></div>
<svg style="left:1545px;top:408px;" width="53" height="53" viewBox="0 0 53 53"><rect width="53" height="53" fill="#DCCBBE"/>
<rect x="0" y="0" width="53" height="5" fill="#E8D8CC"/>
<rect x="9" y="1" width="14" height="5" fill="#F4F4F4"/><rect x="9" y="3" width="14" height="1" fill="#6A5A54"/><rect x="9" y="6" width="14" height="1.5" fill="#8A6A5A"/>
<rect x="1" y="8" width="18" height="3" fill="#C8A898"/>
<rect x="3.5" y="11" width="6" height="9" fill="#D84A2A"/><rect x="4" y="20" width="4.5" height="8" fill="#2A3044"/>
<rect x="2.5" y="31" width="16" height="10" fill="#5A524E"/><rect x="13" y="32" width="5.5" height="8" fill="#D8D8DC"/><rect x="15" y="40" width="2.5" height="10" fill="#2A2A2A"/>
<rect x="8" y="42" width="12" height="11" fill="#BFA898"/>
<path d="M19 53 L20 20 L22 8 L25 2 L31 1 L33 8 L34 20 L34 53 Z" fill="#FFFFFF"/>
<rect x="24" y="14" width="1.5" height="1.5" fill="#222"/><rect x="29" y="19" width="1.5" height="1.5" fill="#333"/><rect x="26" y="24" width="1.5" height="1.5" fill="#222"/><rect x="28" y="28" width="2" height="1.5" fill="#222"/><rect x="31" y="12" width="1.2" height="6" fill="#333"/>
<rect x="33" y="5" width="7" height="12" fill="#6A6E64"/><rect x="36" y="6" width="6" height="6" fill="#6A7A6A"/>
<rect x="42" y="4" width="9" height="13" fill="#B8C8CC"/><rect x="46" y="8" width="3" height="6" fill="#9AB8C8"/>
<rect x="34" y="17" width="17" height="17" fill="#8A8A7E"/><rect x="40" y="18" width="4" height="17" fill="#F4F4F4"/><rect x="48" y="20" width="4" height="14" fill="#E8D8CC"/>
<rect x="48" y="36" width="3" height="10" fill="#1E1E1E"/>
<rect x="29" y="36" width="9" height="15" fill="#D84A2A"/><rect x="31" y="32" width="4" height="5" fill="#6A4A3A"/>
<rect x="38" y="36" width="10" height="17" fill="#D0C0B4"/><rect x="42" y="42" width="8" height="9" fill="#A8A8A0"/>
<rect x="0" y="47" width="19" height="6" fill="#A88A7A"/></svg>
<svg style="left:1655px;top:426px;" width="14" height="15" viewBox="0 0 14 15"><rect x="0" y="0" width="2.2" height="15" fill="#4A4A5A"/><path d="M14 0 L3 7.5 L14 15 Z" fill="#4A4A5A"/></svg>
<svg style="left:1685px;top:417px;" width="33" height="33" viewBox="0 0 33 33"><circle cx="16.5" cy="16.5" r="15.5" fill="none" stroke="#9A9AA6" stroke-width="1.4"/><path d="M12.5 9.5 L23 16.5 L12.5 23.5 Z" fill="#4A4A5A"/></svg>
<svg style="left:1734px;top:426px;" width="14" height="15" viewBox="0 0 14 15"><rect x="11.8" y="0" width="2.2" height="15" fill="#4A4A5A"/><path d="M0 0 L11 7.5 L0 15 Z" fill="#4A4A5A"/></svg>
<svg style="left:1805px;top:426px;" width="20" height="16" viewBox="0 0 20 16"><path d="M10 15 L2.2 7.5 Q-0.5 4.2 2 1.8 Q5.5 -1 10 3.5 Q14.5 -1 18 1.8 Q20.5 4.2 17.8 7.5 Z" fill="none" stroke="#8A8A96" stroke-width="1.5" stroke-linejoin="round"/></svg>
<svg style="left:1836px;top:426px;" width="20" height="16" viewBox="0 0 20 16"><path d="M0.5 5 L4.5 5 L10 0.5 L10 15.5 L4.5 11 L0.5 11 Z" fill="#9A9AA6"/><g fill="none" stroke="#8A8A96" stroke-width="1.5"><path d="M13 4.5 Q15.5 8 13 11.5"/><path d="M15.5 1.5 Q20 8 15.5 14.5"/></g></svg>
<svg style="left:1867px;top:427px;" width="17" height="14" viewBox="0 0 17 14"><g fill="#8A8A96"><rect x="0" y="0" width="2" height="2"/><rect x="3.5" y="0" width="13.5" height="2"/><rect x="0" y="6" width="2" height="2"/><rect x="3.5" y="6" width="13.5" height="2"/><rect x="0" y="12" width="2" height="2"/><rect x="3.5" y="12" width="13.5" height="2"/></g></svg>
<svg style="left:1899px;top:415px;" width="11" height="10" viewBox="0 0 11 10"><path d="M0.5 0.5 L10.5 9.5 M10.5 0.5 L0.5 9.5" stroke="#B0B0B8" stroke-width="1.3"/></svg>
<div class="a" style="left:1899px;top:433px;width:11px;height:7px;background:transparent;border:1.2px solid #C0C0C8;border-radius:1px"></div>
<svg style="left:1785px;top:912px;" width="125" height="120" viewBox="0 0 125 120">
<g>
<ellipse cx="0" cy="0" rx="5.5" ry="3.2" transform="translate(23.5 14.5) rotate(-25)" fill="#8ED47E" stroke="#9A6A4A" stroke-width="0.6"/>
<ellipse cx="0" cy="0" rx="5.5" ry="3.2" transform="translate(29 9) rotate(-70)" fill="#8ED47E" stroke="#9A6A4A" stroke-width="0.6"/>
<path d="M28 15 L31 19" stroke="#7A4A2A" stroke-width="0.8"/>
<path d="M22 82 Q18 95 28 100 L55 100 Q58 90 55 78 Z" fill="#FFFFFF" stroke="#8A4A2A" stroke-width="1"/>
<ellipse cx="40" cy="49" rx="37" ry="30" fill="#FFFFFF" stroke="#8A4A2A" stroke-width="1.3"/>
<path d="M58 68 Q72 62 75 72 Q74 80 62 80" fill="#FFFFFF" stroke="#8A4A2A" stroke-width="1.2"/>
<path d="M28 83 Q45 84 45 92 Q44 98 32 96" fill="none" stroke="#8A4A2A" stroke-width="1.1"/>
<path d="M38 43 L43 45 L38 47 M45 45 Q47 48 49 45 Q51 48 53 45 M60 42 L55 45 L60 47" fill="none" stroke="#5A2A1A" stroke-width="1.2"/>
<ellipse cx="37" cy="51" rx="5" ry="2.5" fill="#F8C8C8"/><ellipse cx="67" cy="47" rx="4" ry="2" fill="#F8C8C8"/>
<path d="M63 64 L56 56 Q53 51 58 50 Q61 50 63 53 Q65 50 68 50 Q73 51 70 56 Z" fill="#F4A0A0" stroke="#E07878" stroke-width="1"/>
<path d="M44 69 L50 66" stroke="#F0B0A8" stroke-width="1.2"/>
</g>
<g fill="#F4BEB4" stroke="#E89A90" stroke-width="0.5"><path transform="translate(93 27) scale(0.70)" d="M0 4.5 L-4.3 0.3 Q-6 -2 -4.2 -3.6 Q-2 -5.2 0 -2.6 Q2 -5.2 4.2 -3.6 Q6 -2 4.3 0.3 Z"/><path transform="translate(115 34) scale(0.50)" d="M0 4.5 L-4.3 0.3 Q-6 -2 -4.2 -3.6 Q-2 -5.2 0 -2.6 Q2 -5.2 4.2 -3.6 Q6 -2 4.3 0.3 Z"/><path transform="translate(85 44) scale(0.80)" d="M0 4.5 L-4.3 0.3 Q-6 -2 -4.2 -3.6 Q-2 -5.2 0 -2.6 Q2 -5.2 4.2 -3.6 Q6 -2 4.3 0.3 Z"/><path transform="translate(101 46) scale(0.80)" d="M0 4.5 L-4.3 0.3 Q-6 -2 -4.2 -3.6 Q-2 -5.2 0 -2.6 Q2 -5.2 4.2 -3.6 Q6 -2 4.3 0.3 Z"/><path transform="translate(110 60) scale(0.70)" d="M0 4.5 L-4.3 0.3 Q-6 -2 -4.2 -3.6 Q-2 -5.2 0 -2.6 Q2 -5.2 4.2 -3.6 Q6 -2 4.3 0.3 Z"/><path transform="translate(88 66) scale(0.90)" d="M0 4.5 L-4.3 0.3 Q-6 -2 -4.2 -3.6 Q-2 -5.2 0 -2.6 Q2 -5.2 4.2 -3.6 Q6 -2 4.3 0.3 Z"/><path transform="translate(106 75) scale(0.70)" d="M0 4.5 L-4.3 0.3 Q-6 -2 -4.2 -3.6 Q-2 -5.2 0 -2.6 Q2 -5.2 4.2 -3.6 Q6 -2 4.3 0.3 Z"/><path transform="translate(88 88) scale(0.80)" d="M0 4.5 L-4.3 0.3 Q-6 -2 -4.2 -3.6 Q-2 -5.2 0 -2.6 Q2 -5.2 4.2 -3.6 Q6 -2 4.3 0.3 Z"/></g>
<g fill="#8ED47E" stroke="#7AB86A" stroke-width="0.8">
<circle cx="12" cy="106" r="11.5"/><circle cx="36" cy="106" r="11.5"/><circle cx="61" cy="106" r="11.5"/><circle cx="86" cy="106" r="11.5"/>
</g>
<g fill="none" stroke="#8A4A2A" stroke-width="1.8">
<path d="M6 100 L18 112 M18 100 L6 112 M12 98 L12 114"/>
<path d="M35 104 l1 1 M37 109 l1 1"/>
<path d="M55 101 L67 101 M56 105 L66 105 L66 112 L56 112 Z"/>
<path d="M80 105 L86 99 L92 105 M86 99 L86 114"/>
</g>
<circle cx="94" cy="100" r="4" fill="#E8402A"/>
</svg>
<div class="a tx " style="left:1551px;top:989px;font-size:35px;color:#C6C6C6;font-family:'Liberation Sans',sans-serif;letter-spacing:-0.2px;">CSDN @Pumpkin__girl</div>
</body></html>
